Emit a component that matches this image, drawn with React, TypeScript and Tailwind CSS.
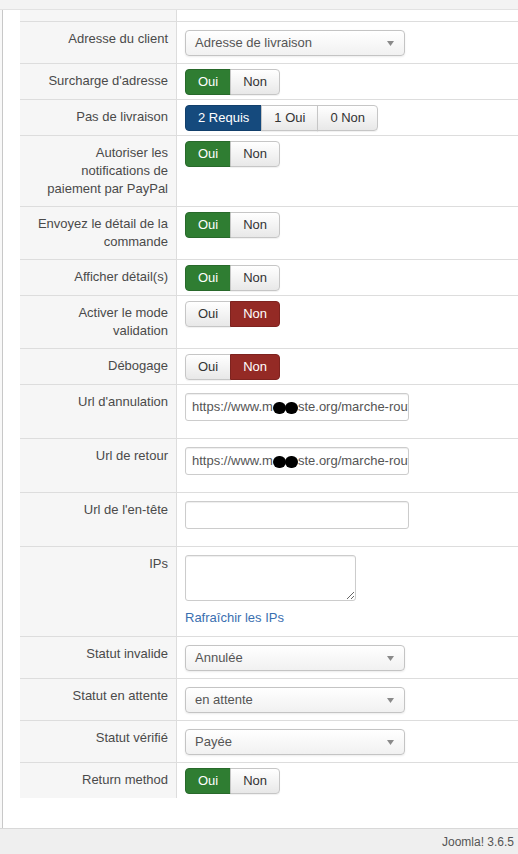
import { ReactNode } from "react";

type Tone = "green" | "blue" | "red";

type Opt = { label: string; tone: Tone };

const activeCls: Record<Tone, string> = {
  green: "bg-[#2f7d32] border-[#28692b] text-white",
  blue: "bg-[#154a7d] border-[#123f6b] text-white",
  red: "bg-[#942a25] border-[#7e231f] text-white",
};

const BtnGroup = ({ options, active }: { options: Opt[]; active: number }) => (
  <div className="flex h-[26px]">
    {options.map((o, i) => (
      <div
        key={o.label}
        className={`flex items-center justify-center px-3 border leading-[18px] ${
          i === 0 ? "rounded-l-[4px]" : "-ml-px"
        } ${i === options.length - 1 ? "rounded-r-[4px]" : ""} ${
          i === active
            ? activeCls[o.tone]
            : "bg-gradient-to-b from-white to-[#e8e8e8] border-[#c6c6c6] text-[#333] shadow-[0_1px_1px_rgba(0,0,0,0.06)]"
        }`}
      >
        {o.label}
      </div>
    ))}
  </div>
);

const yesNo = (yes: boolean) => (
  <BtnGroup
    options={[
      { label: "Oui", tone: "green" },
      { label: "Non", tone: "red" },
    ]}
    active={yes ? 0 : 1}
  />
);

const Select = ({ value }: { value: string }) => (
  <div className="flex items-center justify-between w-[220px] h-[26px] pl-[9px] pr-[10px] border border-[#c4c4c4] rounded-[4px] bg-gradient-to-b from-white to-[#f1f1f1] text-[#555] shadow-[0_1px_2px_rgba(0,0,0,0.08)]">
    <span>{value}</span>
    <svg width="7" height="5" viewBox="0 0 7 5">
      <path d="M0 0h7L3.5 5z" fill="#8a8a8a" />
    </svg>
  </div>
);

// url field with the middle of the domain blotted out
const UrlInput = () => (
  <div className="w-[224px] h-[28px] px-[6px] flex items-center border border-[#ccc] rounded-[3px] bg-white text-[#555] overflow-hidden whitespace-nowrap shadow-[inset_0_1px_1px_rgba(0,0,0,0.07)]">
    <span>https://www.m</span>
    <span className="flex shrink-0 mt-[1px]">
      <span className="w-[13px] h-[12px] rounded-full bg-black" />
      <span className="-ml-[1px] w-[13px] h-[12px] rounded-full bg-black" />
    </span>
    <span>ste.org/marche-routes</span>
  </div>
);

const Row = ({
  label,
  children,
  valueCls = "pt-[5px] pb-[4px]",
}: {
  label: ReactNode;
  children?: ReactNode;
  valueCls?: string;
}) => (
  <div className="flex border-t border-[#ddd]">
    <div className="w-[157px] shrink-0 bg-[#f6f6f6] border-r border-[#ddd] py-2 pr-2 pl-2 text-right leading-[18px] text-[#4a4a4a]">
      {label}
    </div>
    <div className={`flex-1 pl-2 ${valueCls}`}>{children}</div>
  </div>
);

export default function App() {
  return (
    <div className="h-[854px] flex flex-col bg-white text-[13px] font-['Liberation_Sans',Arial,sans-serif]">
      <div className="h-[10px] shrink-0 bg-[#f3f3f3] border-b border-[#e2e2e2]" />

      <div className="flex-1 flex bg-[#f8f8f8] pl-[2px]">
        <div className="flex-1 bg-white border-l border-[#c8c8c8] pl-[17px]">
          <div className="flex h-[11px]">
            <div className="w-[157px] bg-[#f6f6f6] border-r border-[#ddd]" />
            <div className="flex-1" />
          </div>

          <Row label="Adresse du client" valueCls="pt-2 pb-[7px]">
            <Select value="Adresse de livraison" />
          </Row>
          <Row label="Surcharge d'adresse">{yesNo(true)}</Row>
          <Row label="Pas de livraison">
            <BtnGroup
              options={[
                { label: "2 Requis", tone: "blue" },
                { label: "1 Oui", tone: "green" },
                { label: "0 Non", tone: "red" },
              ]}
              active={0}
            />
          </Row>
          <Row
            label={
              <>
                Autoriser les
                <br />
                notifications de
                <br />
                paiement par PayPal
              </>
            }
          >
            {yesNo(true)}
          </Row>
          <Row
            label={
              <>
                Envoyez le détail de la
                <br />
                commande
              </>
            }
          >
            {yesNo(true)}
          </Row>
          <Row label="Afficher détail(s)">{yesNo(true)}</Row>
          <Row
            label={
              <>
                Activer le mode
                <br />
                validation
              </>
            }
          >
            {yesNo(false)}
          </Row>
          <Row label="Débogage">{yesNo(false)}</Row>
          <Row label="Url d'annulation" valueCls="pt-2 pb-[17px]">
            <UrlInput />
          </Row>
          <Row label="Url de retour" valueCls="pt-2 pb-[17px]">
            <UrlInput />
          </Row>
          <Row label="Url de l'en-tête" valueCls="pt-2 pb-[17px]">
            <div className="w-[224px] h-[28px] border border-[#ccc] rounded-[3px] bg-white shadow-[inset_0_1px_1px_rgba(0,0,0,0.07)]" />
          </Row>
          <Row label="IPs" valueCls="pt-2 pb-[9px]">
            <textarea className="block w-[171px] h-[46px] border border-[#ccc] rounded-[3px] bg-white shadow-[inset_0_1px_1px_rgba(0,0,0,0.07)] outline-none" />
            <div className="mt-2 leading-[18px] text-[#3a6fb0]">Rafraîchir les IPs</div>
          </Row>
          <Row label="Statut invalide" valueCls="pt-2 pb-[7px]">
            <Select value="Annulée" />
          </Row>
          <Row label="Statut en attente" valueCls="pt-2 pb-[7px]">
            <Select value="en attente" />
          </Row>
          <Row label="Statut vérifié" valueCls="pt-2 pb-[7px]">
            <Select value="Payée" />
          </Row>
          <Row label="Return method">{yesNo(true)}</Row>
        </div>
      </div>

      <div className="h-[26px] shrink-0 flex items-center justify-end pr-[4px] bg-[#efefef] border-t border-[#d8d8d8] text-[12px] text-[#555]">
        Joomla! 3.6.5
      </div>
    </div>
  );
}
